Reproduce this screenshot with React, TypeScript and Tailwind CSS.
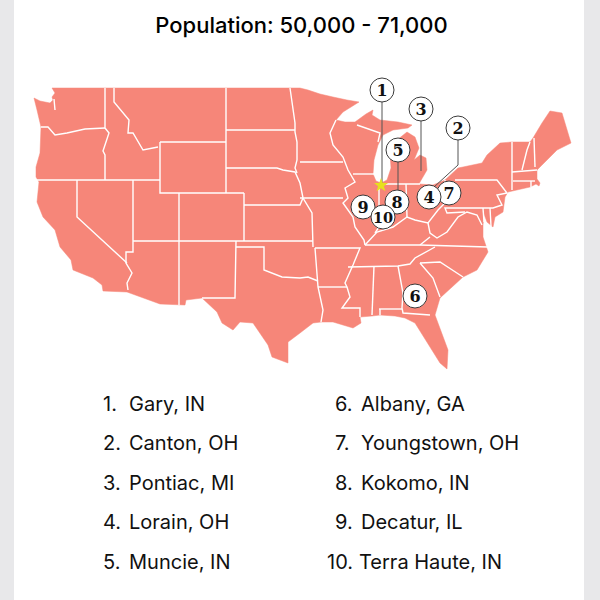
const outline =
  'M34,98 L40,101 L50,103 L53,100 L52,97 L55,93 L52,88 L300,88 L308,90 L320,94 L333,97 L347,100 L359,102 L343,112 L336,120 L345,122 L355,122 L366,114 L373,110 L372,115 L380,120 L398,122 L412,125 L408,128 L393,130 L383,135 L378,145 L374,160 L373,174 L376,181 L381,183 L387,180 L391,168 L390,153 L397,140 L407,132 L415,137 L419,148 L414,160 L420,155 L426,158 L427,170 L420,182 L419,184 L433,185 L445,180 L458,168 L463,167 L482,163 L487,155 L500,143 L512,142 L530,142 L533,138 L542,123 L550,111 L562,113 L571,143 L557,150 L542,165 L537,170 L537,179 L540,183 L539,186 L536,184 L530,187 L508,192 L505,197 L503,212 L495,217 L493,227 L487,222 L484,214 L483,225 L483,237 L488,252 L477,270 L463,277 L440,298 L435,315 L448,350 L447,369 L440,363 L430,347 L415,323 L405,318 L395,316 L380,315 L372,316 L360,317 L361,323 L353,328 L343,325 L333,322 L321,322 L313,323 L300,333 L288,342 L288,363 L272,357 L268,345 L253,323 L240,322 L233,330 L222,323 L217,312 L202,298 L186,300 L185,305 L160,304 L127,292 L103,291 L102,285 L93,278 L73,270 L71,260 L60,247 L55,230 L43,217 L37,202 L39,182 L36,177 L36,167 L40,153 L41,127 L37,110 Z';

const borders = [
  '54,99 55,110',
  '105,88 105,128 109,133 103,151 105,155 105,180',
  '41,127 48,127 55,135 67,133 85,129 105,128',
  '114,88 114,102 129,120 128,133 133,133 143,150 158,147',
  '37,180 160,180',
  '160,142 226,142',
  '160,142 160,193 244,193',
  '226,88 226,193',
  '226,130 295,130',
  '226,168 277,168 283,170 295,172 300,183 303,198 312,213 313,247',
  '290,88 295,123 295,132 297,142 297,160 295,168 297,173',
  '244,193 244,241',
  '244,205 300,205 303,198',
  '77,180 77,217 127,263',
  '133,180 133,252 126,252 126,263 132,273 127,283 128,290',
  '133,241 313,241',
  '179,193 179,305',
  '236,241 235,298 202,298',
  '236,247 264,247 264,270 282,277 300,278 308,277 318,281',
  '300,162 343,162',
  '300,198 343,198',
  '315,248 318,287 323,310 321,322',
  '336,120 330,133 333,145 343,157 348,170 355,182 345,188 348,198 343,203 353,217 355,227 364,240 365,245',
  '353,174 374,174',
  '357,125 380,133 378,142',
  '379,185 379,227 375,233',
  '406,184 407,217',
  '380,184 420,184',
  '365,245 377,232 393,227 407,217 415,220 428,223 438,210 445,203 445,180',
  '455,180 497,180 507,193 497,195 502,205 493,208 445,208 447,213 465,212',
  '512,142 512,190',
  '512,172 537,170',
  '513,181 535,181',
  '531,181 531,187',
  '522,170 527,150 530,142',
  '534,138 535,167',
  '428,223 430,233 437,238 447,232 458,217 467,212 477,215 482,225',
  '420,245 430,237',
  '365,245 375,245 420,245 488,247',
  '348,267 398,266 410,264 415,258 435,247',
  '315,248 360,248 353,265 345,283 347,287 350,297 342,308 360,308 360,317',
  '318,287 347,287',
  '374,266 372,315',
  '398,266 403,293 402,308 403,313 430,315',
  '379,309 402,309',
  '380,309 380,315',
  '420,263 433,278 440,297',
  '420,263 440,262 463,277',
  '483,208 484,222',
  '490,208 491,226',
];

const leaders = [
  '382,102 382,185',
  '421,120 421,171',
  '458,138 458,165 434,187',
  '398,162 398,190',
];

const pins = [
  { n: '1', x: 382, y: 90 },
  { n: '3', x: 421, y: 109 },
  { n: '2', x: 458, y: 128 },
  { n: '5', x: 398, y: 150 },
  { n: '7', x: 449, y: 193 },
  { n: '4', x: 429, y: 197 },
  { n: '8', x: 397, y: 202 },
  { n: '9', x: 363, y: 207 },
  { n: '10', x: 383, y: 217 },
  { n: '6', x: 415, y: 296 },
];

const leftCities = ['Gary, IN', 'Canton, OH', 'Pontiac, MI', 'Lorain, OH', 'Muncie, IN'];
const rightCities = ['Albany, GA', 'Youngstown, OH', 'Kokomo, IN', 'Decatur, IL'];

function CityRow({ num, name }: { num: string; name: string }) {
  return (
    <div className="flex h-[39.5px] items-center">
      <span className="w-[26px] shrink-0">{num}.</span>
      <span>{name}</span>
    </div>
  );
}

export default function App() {
  return (
    <div className="h-[600px] w-[600px] overflow-hidden bg-[#e8e8ea] pl-[14px] pr-[16px]">
      <div className="h-full bg-white text-[#111] [font-family:Inter,'Liberation_Sans',sans-serif]">
        {/* Titulo */}
        <h1 className="flex h-[50px] items-center justify-center pl-[5px] text-[22px] font-medium text-black">
          Population: 50,000 - 71,000
        </h1>

        <div className="pt-[20px]">
          <svg viewBox="14 70 570 310" className="block h-[310px] w-[570px]">
            <path d={outline} fill="#f68679" stroke="#f68679" strokeWidth="0.5" strokeLinejoin="round" />
            {borders.map((b) => (
              <polyline key={b} points={b} fill="none" stroke="#ffffff" strokeWidth="1.4" />
            ))}
            {leaders.map((l) => (
              <polyline key={l} points={l} fill="none" stroke="#555555" strokeWidth="1" />
            ))}
            <polygon
              points="381,178 382.8,182.9 388,183 383.9,186.2 385.4,191.2 381,188.2 376.6,191.2 378.1,186.2 374,183 379.2,182.9"
              fill="#e6e01e"
            />
            {pins.map((p) => (
              <g key={p.n}>
                <circle cx={p.x} cy={p.y} r="12" fill="#ffffff" stroke="#3a3a3a" strokeWidth="1" />
                <text
                  x={p.x}
                  y={p.y + 5.5}
                  textAnchor="middle"
                  fontSize={p.n === '10' ? 14.5 : 16}
                  fontWeight="700"
                  fontFamily="'DejaVu Serif', serif"
                  fill="#111111"
                >
                  {p.n}
                </text>
              </g>
            ))}
          </svg>
        </div>

        {/* Lista de cidades */}
        <div className="flex pt-[4px] text-[20px] leading-none">
          <div className="ml-[89px] w-[232px]">
            {leftCities.map((c, i) => (
              <CityRow key={c} num={String(i + 1)} name={c} />
            ))}
          </div>
          <div>
            {rightCities.map((c, i) => (
              <CityRow key={c} num={String(i + 6)} name={c} />
            ))}
            <div className="-ml-[8px] flex h-[39.5px] items-center">
              <span className="w-[32px] shrink-0">10.</span>
              <span>Terra Haute, IN</span>
            </div>
          </div>
        </div>
      </div>
    </div>
  );
}
